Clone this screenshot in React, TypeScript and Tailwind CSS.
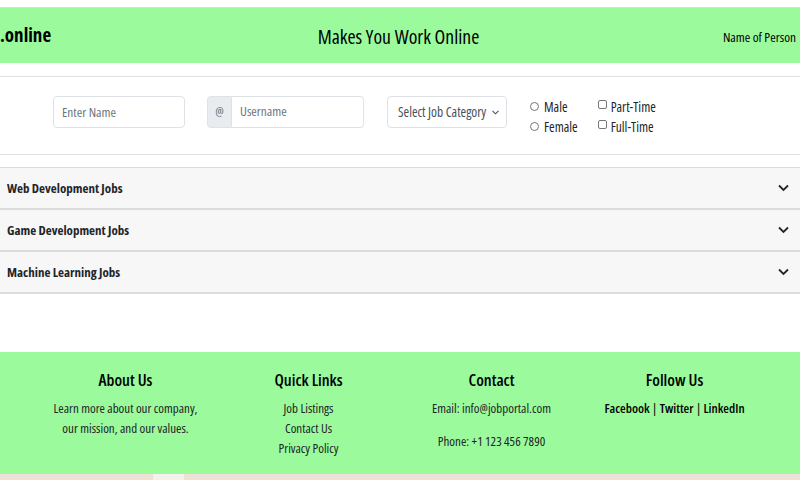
import React from 'react';

const ChevronDown = () => (
  <svg width="11" height="8" viewBox="0 0 11 8" fill="none">
    <path d="M1 1.5 L5.5 6 L10 1.5" stroke="#212529" strokeWidth="1.8" />
  </svg>
);

const JOBS = ['Web Development Jobs', 'Game Development Jobs', 'Machine Learning Jobs'];

export default function App() {
  return (
    <div className="w-[800px] h-[480px] overflow-hidden bg-white text-[#212529] font-['Open_Sans',sans-serif] [font-stretch:condensed]">
      <div className="h-[7px]" />
      <header className="h-[56px] border-t border-[#dcdcdc] bg-[#9bfa9b] flex items-center">
        <div className="flex-1">
          <span className="text-[19px] font-bold text-black">.online</span>
        </div>
        <span className="text-[19.7px] text-black -ml-[3px] pt-[2px]">Makes You Work Online</span>
        <div className="flex-1 text-right">
          <span className="text-[13.3px] text-black mr-[4px]">Name of Person</span>
        </div>
      </header>

      <section className="mt-[13px] h-[79px] border-y border-[#dee2e6] flex items-start pt-[19px] pl-[53px]">
        <input
          placeholder="Enter Name"
          className="w-[132px] h-[32px] border border-[#dee2e6] rounded-[4px] px-[8px] text-[13.3px] placeholder:text-[#6c757d] outline-none"
        />
        <div className="ml-[22px] flex h-[32px]">
          <span className="w-[25px] flex items-center justify-center bg-[#e9ecef] border border-[#dee2e6] rounded-l-[4px] text-[13.3px] text-[#6c757d]">@</span>
          <input
            placeholder="Username"
            className="w-[132px] border border-l-0 border-[#dee2e6] rounded-r-[4px] px-[8px] text-[13.3px] placeholder:text-[#6c757d] outline-none"
          />
        </div>
        <div className="ml-[23px] w-[120px] h-[32px] border border-[#dee2e6] rounded-[4px] flex items-center justify-between pl-[10px] pr-[7px] text-[13.5px] text-[#495057]">
          <span>Select Job Category</span>
          <svg width="7" height="5" viewBox="0 0 7 5" fill="none">
            <path d="M0.5 0.8 L3.5 3.8 L6.5 0.8" stroke="#495057" strokeWidth="1.1" />
          </svg>
        </div>
        <div className="ml-[23px] flex flex-col text-[13.5px] leading-[20px] mt-[1px]">
          <label className="flex items-center gap-[5px]">
            <span className="w-[9px] h-[9px] rounded-full border border-[#767676] -mt-[2px]" />
            <span>Male</span>
          </label>
          <label className="flex items-center gap-[5px]">
            <span className="w-[9px] h-[9px] rounded-full border border-[#767676] -mt-[2px]" />
            <span>Female</span>
          </label>
        </div>
        <div className="ml-[20px] flex flex-col text-[13.5px] leading-[20px] mt-[1px]">
          <label className="flex items-center gap-[4px]">
            <span className="w-[9px] h-[9px] rounded-[2px] border border-[#767676] -mt-[5px]" />
            <span>Part-Time</span>
          </label>
          <label className="flex items-center gap-[4px]">
            <span className="w-[9px] h-[9px] rounded-[2px] border border-[#767676] -mt-[5px]" />
            <span>Full-Time</span>
          </label>
        </div>
      </section>

      <div className="mt-[12px] border-t border-[#dcdcdc]">
        {JOBS.map(j => (
          <div key={j} className="h-[42px] bg-[#f7f7f7] border-b-2 border-[#dcdcdc] flex items-center justify-between pl-[7px] pr-[11px]">
            <span className="text-[13px] font-bold pt-[1px]">{j}</span>
            <ChevronDown />
          </div>
        ))}
      </div>

      <div className="h-[58px]" />

      <footer className="h-[122px] bg-[#9bfa9b] grid grid-cols-4 px-[34px] pt-[16px] text-center">
        <div>
          <h3 className="text-[16.5px] font-semibold text-black">About Us</h3>
          <p className="mt-[5px] text-[13px] leading-[20px]">Learn more about our company,<br />our mission, and our values.</p>
        </div>
        <div>
          <h3 className="text-[16.5px] font-semibold text-black">Quick Links</h3>
          <ul className="mt-[5px] text-[13px] leading-[20px]">
            <li>Job Listings</li>
            <li>Contact Us</li>
            <li>Privacy Policy</li>
          </ul>
        </div>
        <div>
          <h3 className="text-[16.5px] font-semibold text-black">Contact</h3>
          <p className="mt-[5px] text-[13px] leading-[20px]">Email: info@jobportal.com</p>
          <p className="mt-[13px] text-[13px] leading-[20px]">Phone: +1 123 456 7890</p>
        </div>
        <div>
          <h3 className="text-[16.5px] font-semibold text-black">Follow Us</h3>
          <p className="mt-[5px] text-[13px] leading-[20px] text-black"><b className="font-semibold">Facebook</b> | <b className="font-semibold">Twitter</b> | <b className="font-semibold">LinkedIn</b></p>
        </div>
      </footer>
      <div className="h-[6px] bg-[#efe0d5] flex">
        <div className="ml-[153px] w-[31px] bg-[#f6efea]" />
      </div>
    </div>
  );
}
